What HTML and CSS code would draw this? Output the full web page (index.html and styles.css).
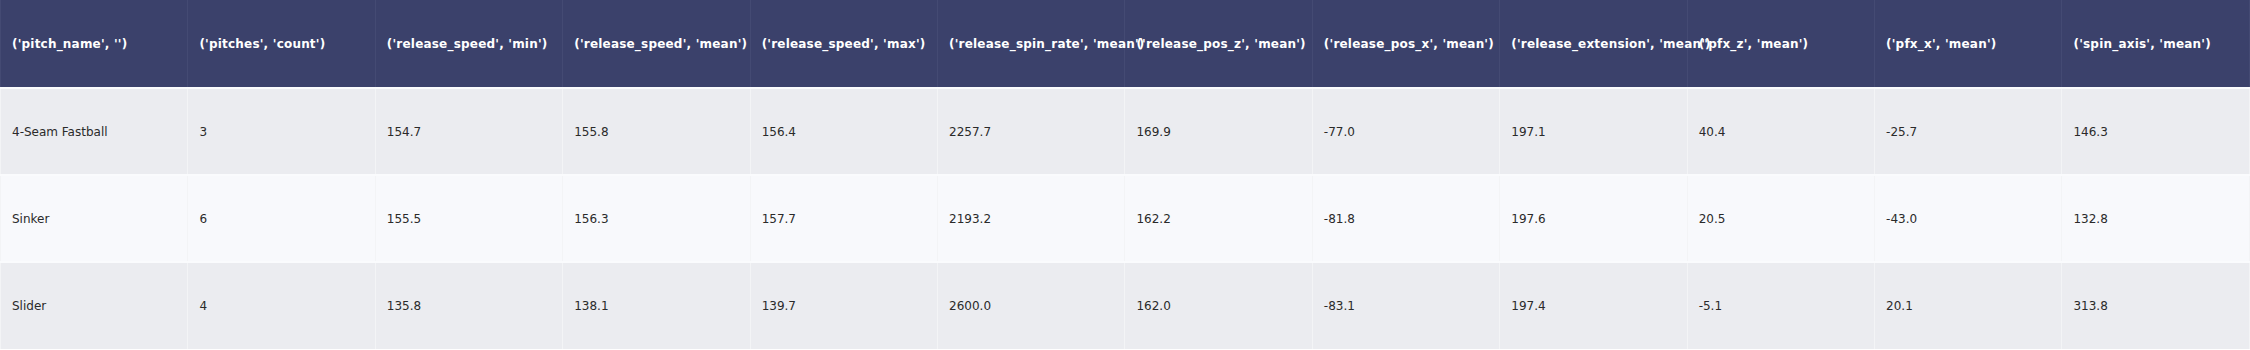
FILE: index.html
```html
<!DOCTYPE html>
<html>
<head>
    <title>Pitch summary</title>
    <link rel="stylesheet" href="styles.css">
</head>
<body>
    <table class="stats">
        <thead>
            <tr>
                <th>('pitch_name', '')</th>
                <th>('pitches', 'count')</th>
                <th>('release_speed', 'min')</th>
                <th>('release_speed', 'mean')</th>
                <th>('release_speed', 'max')</th>
                <th>('release_spin_rate', 'mean')</th>
                <th>('release_pos_z', 'mean')</th>
                <th>('release_pos_x', 'mean')</th>
                <th>('release_extension', 'mean')</th>
                <th>('pfx_z', 'mean')</th>
                <th>('pfx_x', 'mean')</th>
                <th>('spin_axis', 'mean')</th>
            </tr>
        </thead>
        <tbody>
            <tr class="odd">
                <td>4-Seam Fastball</td>
                <td>3</td>
                <td>154.7</td>
                <td>155.8</td>
                <td>156.4</td>
                <td>2257.7</td>
                <td>169.9</td>
                <td>-77.0</td>
                <td>197.1</td>
                <td>40.4</td>
                <td>-25.7</td>
                <td>146.3</td>
            </tr>
            <tr class="even">
                <td>Sinker</td>
                <td>6</td>
                <td>155.5</td>
                <td>156.3</td>
                <td>157.7</td>
                <td>2193.2</td>
                <td>162.2</td>
                <td>-81.8</td>
                <td>197.6</td>
                <td>20.5</td>
                <td>-43.0</td>
                <td>132.8</td>
            </tr>
            <tr class="odd">
                <td>Slider</td>
                <td>4</td>
                <td>135.8</td>
                <td>138.1</td>
                <td>139.7</td>
                <td>2600.0</td>
                <td>162.0</td>
                <td>-83.1</td>
                <td>197.4</td>
                <td>-5.1</td>
                <td>20.1</td>
                <td>313.8</td>
            </tr>
        </tbody>
    </table>
</body>
</html>
```

FILE: styles.css
```css
body {
    margin: 0;
    background: #ffffff;
    font-family: "DejaVu Sans", Verdana, sans-serif;
}
.stats {
    width: 2250px;
    table-layout: fixed;
    border-collapse: collapse;
}
.stats th, .stats td {
    height: 87px;
    padding: 0 0 0 11px;
    text-align: left;
    vertical-align: middle;
    white-space: nowrap;
    overflow: visible;
    font-size: 12px;
    box-sizing: border-box;
}
.stats th {
    background: #3b416b;
    color: #ffffff;
    font-weight: bold;
    letter-spacing: 0.2px;
    border-left: 1px solid #444a73;
    border-right: 1px solid #444a73;
    height: 88px;
}
.stats td {
    color: #2a2a2a;
    border-left: 1px solid #f3f4f6;
    border-right: 1px solid #f3f4f6;
    border-top: 2px solid #fafbfd;
}
.odd td {
    background: #ebecf0;
}
.even td {
    background: #f8f9fc;
}
```
